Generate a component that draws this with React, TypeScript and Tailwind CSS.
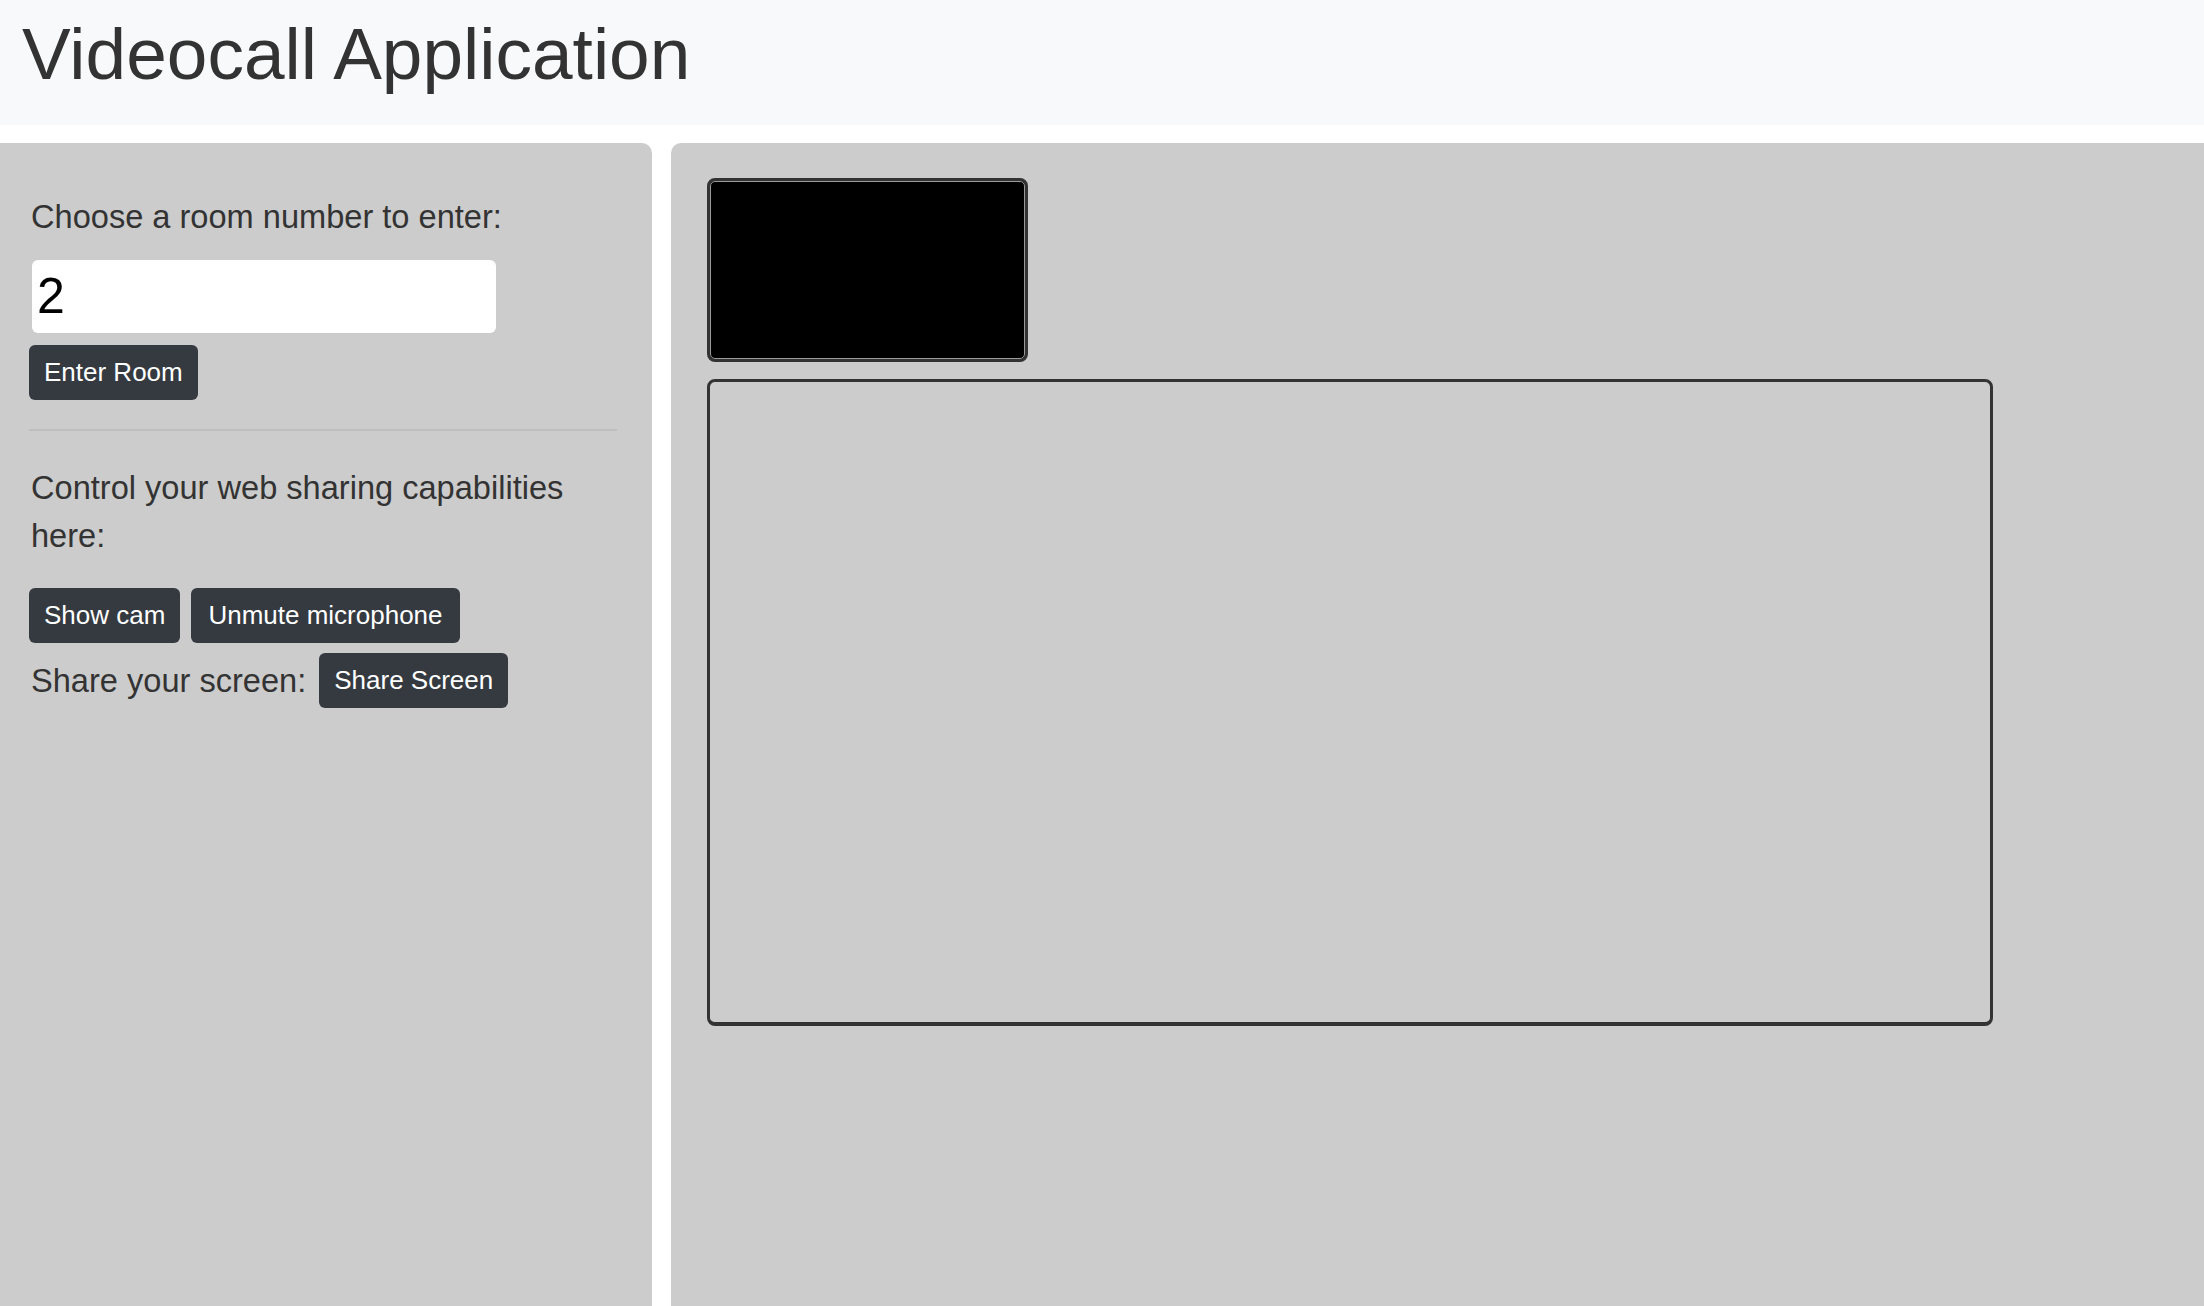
import { useState } from "react";

function App() {
  const [room, setRoom] = useState("2");
  const [camOn, setCamOn] = useState(false);
  const [micOn, setMicOn] = useState(false);

  const btn =
    "bg-[#343a40] text-white text-[26px] leading-[39px] px-[15px] py-[8px] rounded-[6px]";

  return (
    <div className="h-screen flex flex-col bg-white text-[#333] font-['Liberation_Sans',Arial,sans-serif]">
      <div className="h-[125px] shrink-0 bg-[#f8f9fa] pl-[22px] pt-[11px]">
        <h1 className="text-[73px] leading-[86px] font-normal">Videocall Application</h1>
      </div>

      <div className="flex-1 flex gap-[19px] mt-[18px] min-h-0">
        {/* left controls */}
        <div className="w-[652px] shrink-0 bg-[#cccccc] rounded-tr-[10px] pl-[29px] pr-[35px] pt-[50px]">
          <p className="text-[32.6px] leading-[48px] pl-[2px]">Choose a room number to enter:</p>
          <input
            value={room}
            onChange={(e) => setRoom(e.target.value)}
            className="block mt-[19px] ml-[3px] w-[464px] h-[73px] bg-white rounded-[6px] pl-[5px] text-[50px] text-black outline-none"
          />
          <button className={`${btn} mt-[12px] block`}>Enter Room</button>
          <div className="mt-[29px] h-[2px] bg-[#bfbfbf]" />

          <p className="mt-[33px] text-[32.6px] leading-[48px] pl-[2px]">
            Control your web sharing capabilities here:
          </p>
          <div className="flex gap-[11px] mt-[28px]">
            <button className={btn} onClick={() => setCamOn(!camOn)}>
              {camOn ? "Hide cam" : "Show cam"}
            </button>
            <button className={`${btn} px-[17px]`} onClick={() => setMicOn(!micOn)}>
              {micOn ? "Mute microphone" : "Unmute microphone"}
            </button>
          </div>
          <div className="flex items-center mt-[10px]">
            <span className="text-[32.6px] leading-[48px] pl-[2px]">Share your screen:</span>
            <button className={`${btn} ml-[13px]`}>Share Screen</button>
          </div>
        </div>

        {/* video area */}
        <div className="flex-1 bg-[#cccccc] rounded-tl-[10px] pl-[36px] pt-[35px]">
          <div className="w-[321px] h-[184px] border-[3px] border-[#333] rounded-[8px] bg-black">
            <div className="w-full h-full rounded-[5px] border border-[#9a9a9a] bg-black" />
          </div>
          <div className="mt-[17px] w-[1286px] h-[647px] border-[3px] border-b-[4px] border-[#333] rounded-[8px]" />
        </div>
      </div>
    </div>
  );
}

export default App;
